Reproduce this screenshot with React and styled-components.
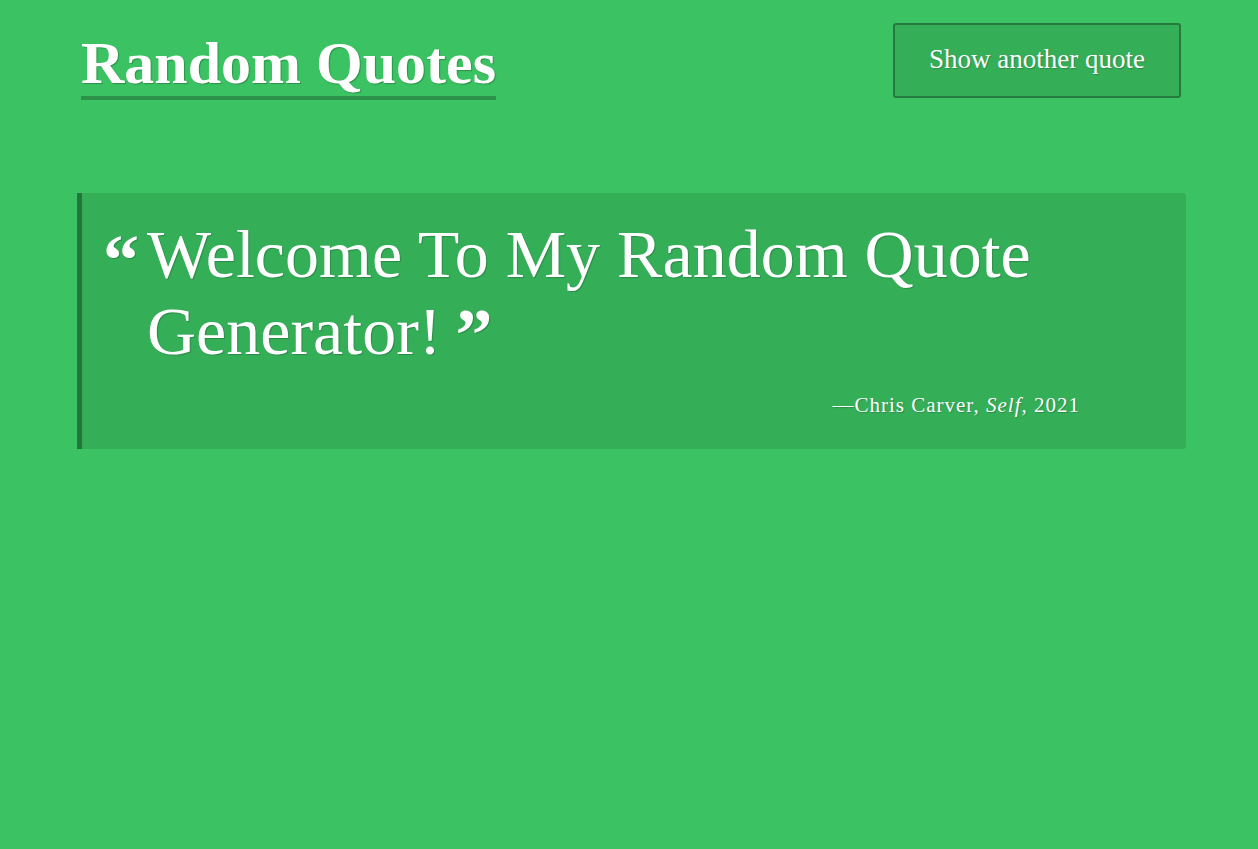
import React from "react";
import styled, { createGlobalStyle } from "styled-components";

const GlobalStyle = createGlobalStyle`
  html, body {
    margin: 0;
    padding: 0;
    background: #3bc262;
    min-height: 100%;
  }
  body {
    font-family: "Liberation Serif", "Times New Roman", serif;
    color: #fff;
  }
`

const Page = styled.div`
  min-height: 849px;
  padding: 0 72px 0 77px;
  box-sizing: border-box;
`

const Header = styled.header`
  display: flex;
  justify-content: space-between;
  align-items: flex-start;
  padding: 23px 5px 0 4px;
`

const Title = styled.h1`
  display: inline-block;
  margin: 8px 0 0;
  font-size: 60px;
  line-height: 65px;
  font-weight: 700;
  border-bottom: 4px solid rgba(0, 0, 0, 0.25);
  text-shadow: 1px 1px 1px rgba(0, 0, 0, 0.25);
`

const Button = styled.button`
  width: 288px;
  height: 75px;
  border: 2px solid rgba(0, 0, 0, 0.3);
  border-radius: 3px;
  background: rgba(0, 0, 0, 0.1);
  color: #fff;
  font-family: inherit;
  font-size: 27px;
  padding-bottom: 3px;
  text-shadow: 1px 1px 1px rgba(0, 0, 0, 0.2);
  cursor: pointer;
`

const Card = styled.blockquote`
  margin: 93px 0 0;
  padding: 23px 26px 29px 21px;
  background: rgba(0, 0, 0, 0.1);
  border-left: 5px solid rgba(0, 0, 0, 0.33);
  border-radius: 0 3px 3px 0;
`

const QuoteRow = styled.div`
  display: flex;
`

const Mark = styled.span`
  font-size: ${(p) => (p.$close ? "74px" : "72px")};
  line-height: 77px;
  font-weight: 700;
  text-shadow: 1px 1px 1px rgba(0, 0, 0, 0.2);
  vertical-align: ${(p) => (p.$close ? "-6px" : "baseline")};
  margin-left: ${(p) => (p.$close ? "14px" : "0")};
`

const OpenCol = styled.div`
  width: 44px;
  flex-shrink: 0;
  margin-top: 6px;
`

const QuoteText = styled.p`
  margin: 0;
  flex: 1;
  font-size: 68px;
  line-height: 77px;
  text-shadow: 1px 1px 1px rgba(0, 0, 0, 0.2);
`

const Source = styled.footer`
  margin-top: 16px;
  padding-right: 80px;
  text-align: right;
  font-size: 21px;
  line-height: 30px;
  letter-spacing: 1px;
  text-shadow: 1px 1px 1px rgba(0, 0, 0, 0.2);
`

const App = () => {
  return (
    <Page>
      <GlobalStyle />
      <Header>
        <Title>Random Quotes</Title>
        <Button>Show another quote</Button>
      </Header>
      <Card>
        <QuoteRow>
          <OpenCol>
            <Mark>“</Mark>
          </OpenCol>
          <QuoteText>
            Welcome To My Random Quote Generator!<Mark $close>”</Mark>
          </QuoteText>
        </QuoteRow>
        <Source>
          —Chris Carver, <i>Self</i>, 2021
        </Source>
      </Card>
    </Page>
  )
}

export default App;
